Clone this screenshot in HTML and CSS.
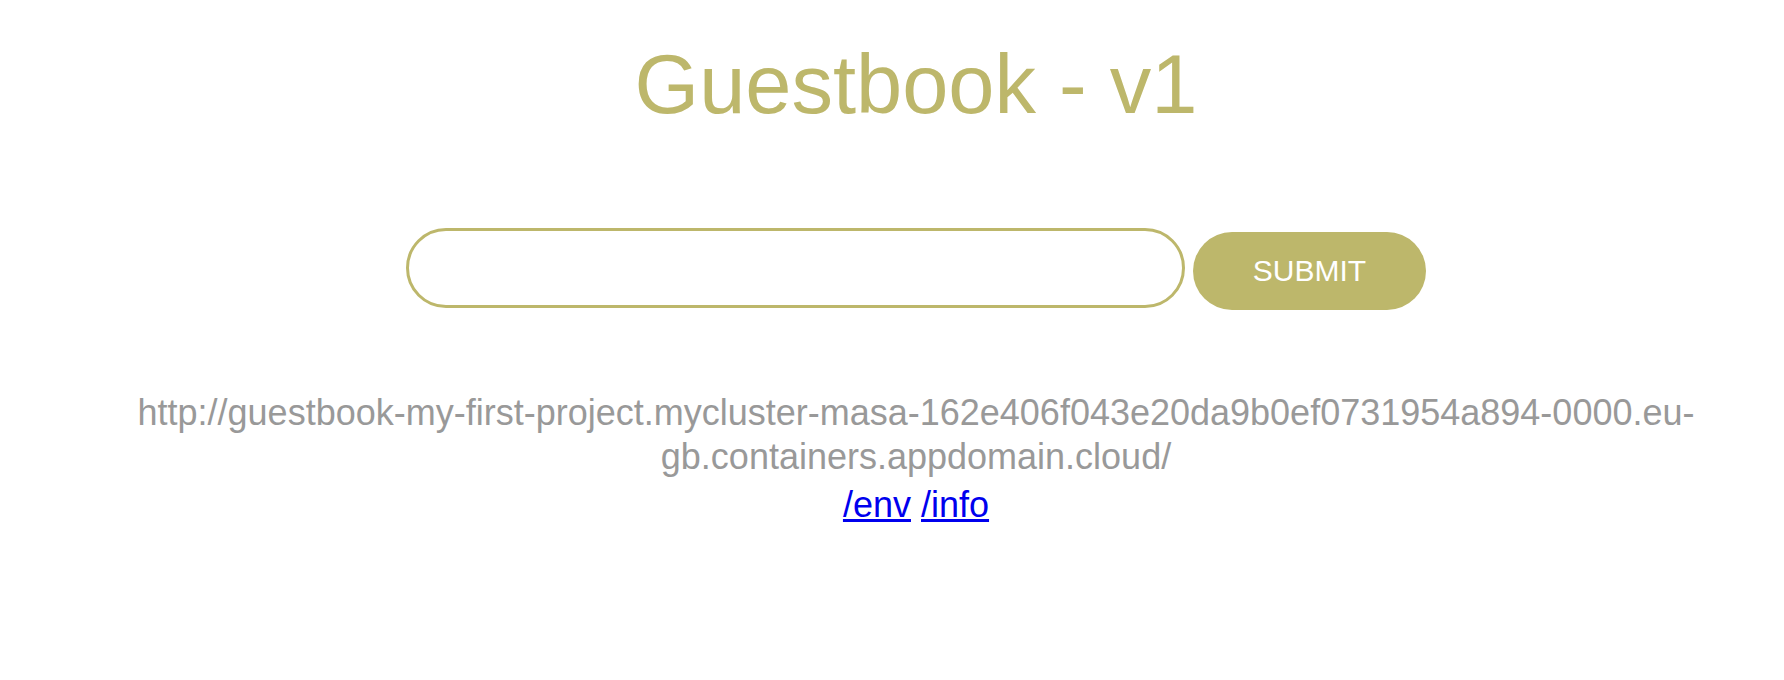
FILE: index.html
```html
<!DOCTYPE html>
<html lang="en">
<head>
<meta charset="utf-8">
<title>Guestbook - v1</title>
<link rel="stylesheet" href="styles.css">
</head>
<body>
  <main class="page">
    <h1 class="title">Guestbook - v1</h1>
    <form class="entry-form">
      <input class="entry-input" type="text" aria-label="Message">
      <a class="submit-btn" href="#">Submit</a>
    </form>
    <p class="host">http://guestbook-my-first-project.mycluster-masa-162e406f043e20da9b0ef0731954a894-0000.eu-gb.containers.appdomain.cloud/</p>
    <p class="links"><a href="#">/env</a> <a href="#">/info</a></p>
  </main>
</body>
</html>
```

FILE: styles.css
```css
html, body {
  margin: 0;
  padding: 0;
  background: #ffffff;
}

body {
  font-family: "Liberation Sans", Arial, sans-serif;
  color: #999999;
}

.page {
  padding: 37px 0 0 48px;
  display: flex;
  flex-direction: column;
  align-items: center;
  text-align: center;
}

.title {
  margin: 0 0 95px;
  font-size: 83px;
  line-height: 96px;
  font-weight: 400;
  color: #bdb76b;
}

.entry-form {
  display: flex;
  align-items: flex-start;
  gap: 8px;
  margin: 0 0 81px;
}

.entry-input {
  box-sizing: border-box;
  width: 779px;
  height: 80px;
  margin: 0;
  padding: 0 40px;
  border: 3px solid #bdb76b;
  border-radius: 1000px;
  background: #ffffff;
  font-family: "Liberation Sans", Arial, sans-serif;
  font-size: 30px;
  color: #999999;
  outline: none;
}

.submit-btn {
  box-sizing: border-box;
  width: 233px;
  height: 78px;
  margin-top: 4px;
  display: flex;
  align-items: center;
  justify-content: center;
  background: #bdb76b;
  border-radius: 1000px;
  color: #ffffff;
  font-size: 30px;
  text-transform: uppercase;
  text-decoration: none;
}

.host {
  margin: 0;
  width: 1660px;
  font-size: 36px;
  line-height: 44px;
  color: #999999;
}

.links {
  margin: 4px 0 0;
  font-size: 36px;
  line-height: 44px;
}

.links a {
  color: #0000ee;
  text-decoration: underline;
}
```
